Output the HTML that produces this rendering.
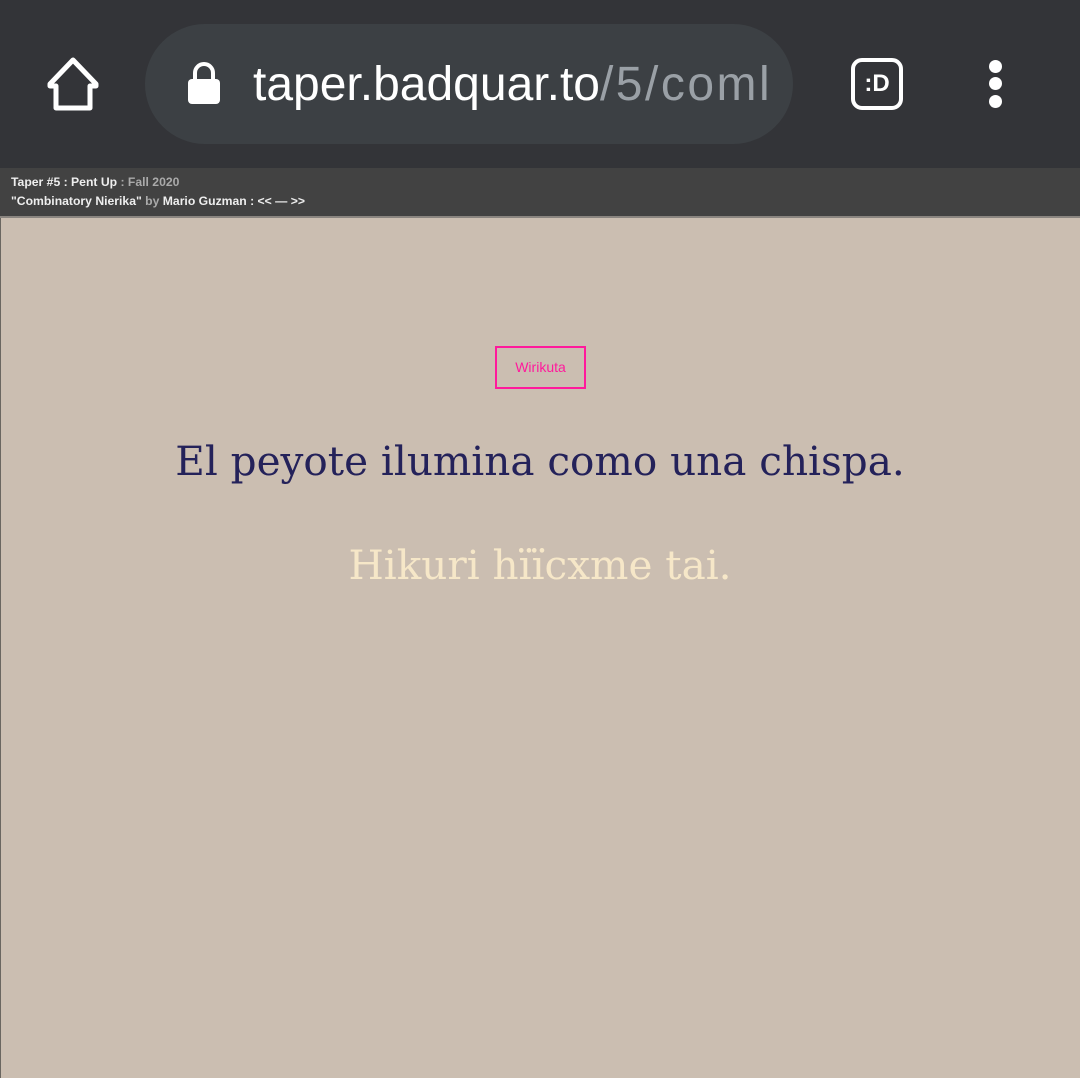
<!DOCTYPE html>
<html><head><style>
body{margin:0;width:1080px;height:1078px;overflow:hidden;background:#cbbeb1;font-family:"Liberation Sans",sans-serif;position:relative}
.top{position:absolute;left:0;top:0;width:1080px;height:168px;background:#333438}
.pill{position:absolute;left:145px;top:24px;width:648px;height:120px;border-radius:60px;background:#3c4044}
.url{position:absolute;left:253px;top:57px;font-size:48px;color:#fff;letter-spacing:0;white-space:nowrap;width:518px;overflow:hidden}
.url span{color:#9aa0a6;letter-spacing:2.5px}
.sub{position:absolute;left:0;top:168px;width:1080px;height:48px;background:#424242;border-bottom:2px solid #8a8580}
.sub div{position:absolute;left:11px;font-size:12.2px;font-weight:bold;color:#eee;white-space:nowrap}
.g{color:#aaa;font-weight:bold}
.box{position:absolute;left:495px;top:346px;width:87px;height:39px;border:2px solid #ff1a9c;color:#ff1a9c;font-size:14px;text-align:center;line-height:39px}
.t{position:absolute;left:0;width:1080px;text-align:center;font-family:"DejaVu Serif","Liberation Serif",serif;font-size:40.5px}
.side{position:absolute;left:0;top:218px;width:1px;height:860px;background:#6a6660}
</style></head><body>
<div class="top">
<svg style="position:absolute;left:44px;top:56px" width="58" height="56" viewBox="0 0 58 56"><path d="M29 4 L52 28 L52 30 L46 30 L46 52 L12 52 L12 30 L6 30 L6 28 Z" fill="none" stroke="#fff" stroke-width="5" stroke-linejoin="round"/></svg>
<div class="pill"></div>
<svg style="position:absolute;left:187px;top:62px" width="34" height="42" viewBox="0 0 34 42"><path d="M8 18 V11 a9 9 0 0 1 18 0 V18" fill="none" stroke="#fff" stroke-width="4"/><rect x="1" y="17" width="32" height="25" rx="4" fill="#fff"/></svg>
<div class="url">taper.badquar.to<span>/5/coml</span></div>
<div style="position:absolute;left:851px;top:58px;width:44px;height:44px;border:4px solid #fff;border-radius:11px;color:#fff;font-weight:bold;font-size:24px;text-align:center;line-height:44px">:D</div>
<div style="position:absolute;left:989px;top:60px;width:13px;height:13px;border-radius:50%;background:#fff"></div>
<div style="position:absolute;left:989px;top:77px;width:13px;height:13px;border-radius:50%;background:#fff"></div>
<div style="position:absolute;left:989px;top:95px;width:13px;height:13px;border-radius:50%;background:#fff"></div>
</div>
<div class="sub">
<div style="top:7px">Taper #5 : Pent Up <span class="g">: Fall 2020</span></div>
<div style="top:26px">"Combinatory Nierika" <span class="g">by</span> Mario Guzman : &lt;&lt; — &gt;&gt;</div>
</div>
<div class="side"></div>
<div class="box">Wirikuta</div>
<div class="t" style="top:437px;color:#24225a">El peyote ilumina como una chispa.</div>
<div class="t" style="top:541px;color:#f6e7c8">Hikuri hïïcxme tai.</div>
</body></html>
